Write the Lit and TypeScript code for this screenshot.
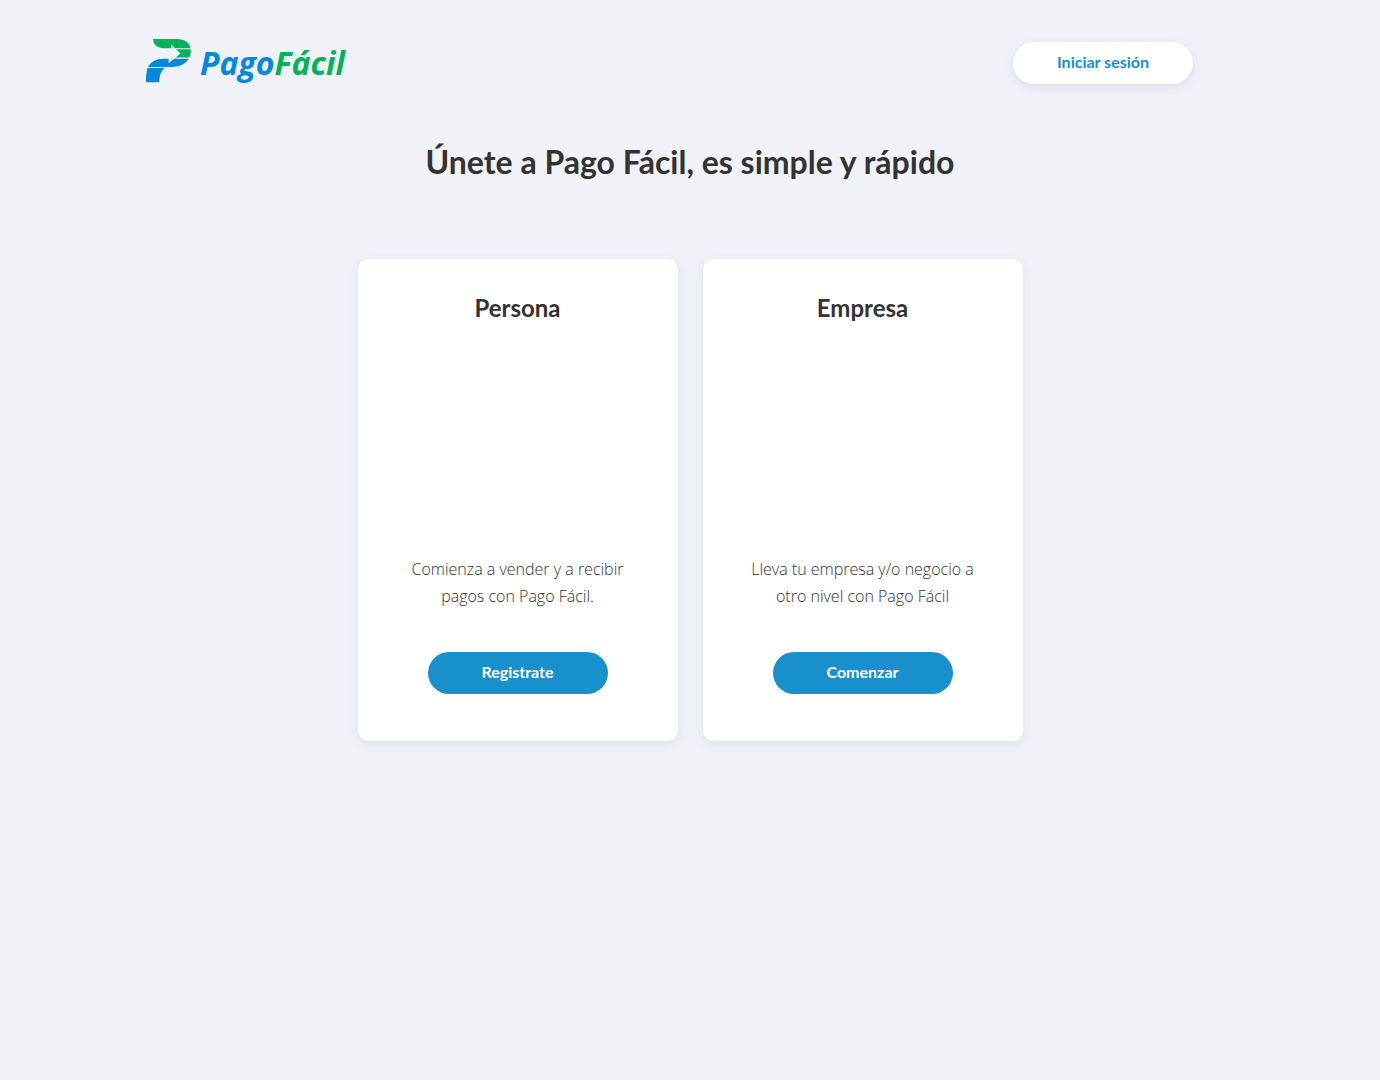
import { LitElement, html, css } from "lit";
import { customElement, property } from "lit/decorators.js";

@customElement("plan-card")
export class PlanCard extends LitElement {
  @property() heading = "";
  @property() text = "";
  @property() action = "";

  static styles = css`
    :host {
      display: block;
    }
    .card {
      box-sizing: border-box;
      height: 100%;
      display: flex;
      flex-direction: column;
      align-items: center;
      padding: 33px 40px 47px;
      background: #fff;
      border-radius: 10px;
      box-shadow: 0 3px 10px rgba(60, 90, 160, 0.1);
      text-align: center;
    }
    .heading {
      margin: 0;
      font-size: 24px;
      line-height: 32px;
      font-weight: 700;
    }
    .art {
      height: 232px;
    }
    .text {
      margin: 0 0 42px;
      font-family: "Open Sans", "Noto Sans", sans-serif;
      font-size: 16px;
      line-height: 27px;
      font-weight: 300;
    }
    .action {
      box-sizing: border-box;
      width: 180px;
      height: 42px;
      margin-top: auto;
      padding: 0 0 4px;
      border: 0;
      border-radius: 21px;
      background: #198fcc;
      color: #fff;
      font: inherit;
      font-size: 16px;
      font-weight: 700;
      cursor: pointer;
    }
  `;

  render() {
    return html`
      <section class="card">
        <h2 class="heading">${this.heading}</h2>
        <div class="art"></div>
        <p class="text">${this.text}</p>
        <button class="action" type="button">${this.action}</button>
      </section>
    `;
  }
}

@customElement("app-root")
export class AppRoot extends LitElement {
  static styles = css`
    :host {
      display: block;
      box-sizing: border-box;
      min-height: 100vh;
      background: #f0f2f8;
      color: #333;
      font-family: Lato, Carlito, sans-serif;
    }
    .header {
      display: flex;
      align-items: flex-start;
      justify-content: space-between;
      max-width: 1090px;
      margin: 0 auto;
      padding: 38px 42px 0 0;
      box-sizing: border-box;
    }
    .brand {
      display: flex;
      align-items: flex-start;
      gap: 9px;
      text-decoration: none;
      font-family: "Open Sans", "Noto Sans", sans-serif;
      font-size: 32px;
      line-height: 50px;
      font-weight: 700;
      font-style: italic;
      color: #0488dc;
    }
    .brand .green {
      color: #00b259;
    }
    .mark {
      display: block;
      width: 46px;
      height: 46px;
    }
    .login {
      box-sizing: border-box;
      display: flex;
      align-items: center;
      justify-content: center;
      width: 180px;
      height: 42px;
      margin-top: 4px;
      padding-bottom: 4px;
      border-radius: 21px;
      background: #fff;
      box-shadow: 0 3px 10px rgba(60, 90, 160, 0.12);
      color: #198fcc;
      font-size: 16px;
      font-weight: 700;
      text-decoration: none;
    }
    .title {
      margin: 53px 16px 76px;
      font-size: 32px;
      line-height: 42px;
      font-weight: 700;
      text-align: center;
    }
    .plans {
      display: grid;
      grid-template-columns: repeat(auto-fit, 320px);
      justify-content: center;
      gap: 25px;
      padding: 0 16px 40px;
    }
  `;

  render() {
    return html`
      <header class="header">
        <a class="brand" href="#" aria-label="PagoFácil">
          <svg class="mark" viewBox="0 0 46 46" aria-hidden="true">
            <path fill="#00b259" d="M8 1H32C39.500 1 44.500 4.500 45.600 10.200H30L26.300 6.500V10.200H19C12.500 10.200 8.300 7 8 1Z" />
            <path fill="#00b259" d="M31 11.200H45.900C46 14 45.400 17 44.300 19.600H30.500L35.500 15.600Z" />
            <path fill="#0488dc" d="M43.800 20.800C40.500 26 35 28.900 27 28.900H3C6 23.500 11.500 20.800 18 20.800H23.700V25.300L29 20.800Z" />
            <path fill="#0488dc" d="M2.500 29.900H20C16 32.500 14.600 37 14.300 44.200H1C1 39 1.200 34 2.500 29.900Z" />
          </svg>
          <span>Pago<span class="green">Fácil</span></span>
        </a>
        <a class="login" href="#">Iniciar sesión</a>
      </header>
      <main>
        <h1 class="title">Únete a Pago Fácil, es simple y rápido</h1>
        <div class="plans">
          <plan-card
            heading="Persona"
            text="Comienza a vender y a recibir pagos con Pago Fácil."
            action="Registrate"
          ></plan-card>
          <plan-card
            heading="Empresa"
            text="Lleva tu empresa y/o negocio a otro nivel con Pago Fácil"
            action="Comenzar"
          ></plan-card>
        </div>
      </main>
    `;
  }
}
